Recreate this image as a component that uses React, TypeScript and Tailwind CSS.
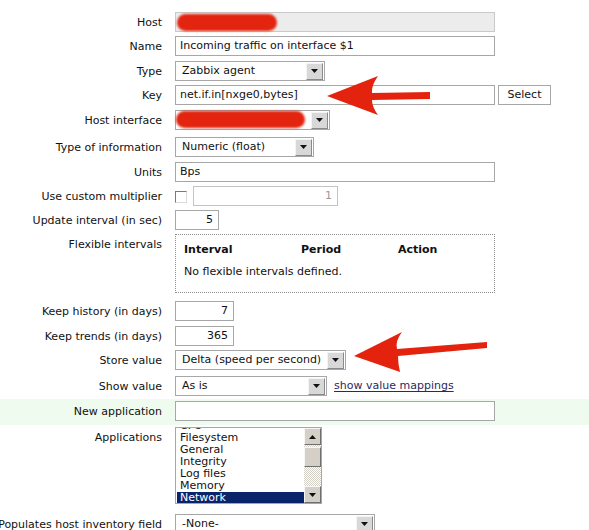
import React from "react";

function Label({ children }: { children?: React.ReactNode }) {
  return (
    <div className="flex w-[162px] shrink-0 justify-end pt-[3px] leading-[20px] whitespace-nowrap">
      {children}
    </div>
  );
}

function Row({
  label,
  h,
  children,
  className = "",
}: {
  label?: React.ReactNode;
  h: string;
  children?: React.ReactNode;
  className?: string;
}) {
  return (
    <div className={`flex ${h} ${className}`}>
      <Label>{label}</Label>
      <div className="ml-[13px] flex items-start gap-[3px] pt-[2px]">{children}</div>
    </div>
  );
}

function DropButton() {
  return (
    <span className="mr-[1px] flex h-[17px] w-[17px] shrink-0 items-center justify-center border border-t-[#f4f4f4] border-l-[#f4f4f4] border-r-[#8a8a8a] border-b-[#8a8a8a] bg-[#d8d8d8]">
      <svg width="7" height="4" viewBox="0 0 7 4">
        <path d="M0 0 H7 L3.5 4 Z" fill="#111" />
      </svg>
    </span>
  );
}

function Select({
  w,
  children,
}: {
  w: string;
  children?: React.ReactNode;
}) {
  return (
    <div className={`relative flex h-[20px] items-center border border-[#a7a7a7] bg-white ${w}`}>
      <span className="flex-1 truncate pl-[6px] leading-[18px]">{children}</span>
      <DropButton />
    </div>
  );
}

function TextBox({
  w,
  children,
  right = false,
  muted = false,
  className = "",
}: {
  w: string;
  children?: React.ReactNode;
  right?: boolean;
  muted?: boolean;
  className?: string;
}) {
  return (
    <div
      className={`relative h-[20px] border border-[#a7a7a7] leading-[18px] whitespace-nowrap ${w} ${
        right ? "pr-[5px] text-right" : "pl-[4px]"
      } ${muted ? "text-[#9a9a9a]" : ""} ${className || "bg-white"}`}
    >
      {children}
    </div>
  );
}

function Scribble({ w }: { w: string }) {
  return (
    <div
      className={`absolute top-[1px] left-[1px] h-[17px] rounded-full bg-[#e3240e] blur-[0.8px] ${w}`}
    />
  );
}

function ScrollArrow({ up }: { up: boolean }) {
  return (
    <div className="flex h-[17px] w-[17px] items-center justify-center border border-t-[#f6f6f6] border-l-[#f6f6f6] border-r-[#6e6e6e] border-b-[#6e6e6e] bg-[#d4d0c8]">
      <svg width="7" height="4" viewBox="0 0 7 4">
        <path d={up ? "M0 4 H7 L3.5 0 Z" : "M0 0 H7 L3.5 4 Z"} fill="#111" />
      </svg>
    </div>
  );
}

const apps = ["CPU", "Filesystem", "General", "Integrity", "Log files", "Memory", "Network"];

export default function App() {
  return (
    <div className="relative h-[530px] w-[589px] overflow-hidden bg-white font-['DejaVu_Sans',Verdana,sans-serif] text-[11px] text-[#111]">
      <div className="flex flex-col pt-[10px]">
        <Row label="Host" h="h-[24px]">
          <TextBox w="w-[320px]" className="border-[#c9c9c9] bg-[#ececec]">
            <Scribble w="w-[100px]" />
          </TextBox>
        </Row>
        <Row label="Name" h="h-[25px]">
          <TextBox w="w-[320px]">Incoming traffic on interface $1</TextBox>
        </Row>
        <Row label="Type" h="h-[24px]">
          <Select w="w-[150px]">Zabbix agent</Select>
        </Row>
        <Row label="Key" h="h-[25px]">
          <TextBox w="w-[320px]">net.if.in[nxge0,bytes]</TextBox>
          <div className="flex h-[20px] w-[53px] items-center justify-center border border-[#a7a7a7] bg-white">
            Select
          </div>
        </Row>
        <Row label="Host interface" h="h-[27px]">
          <div className="relative">
            <Select w="w-[155px]" />
            <Scribble w="w-[129px]" />
          </div>
        </Row>
        <Row label="Type of information" h="h-[25px]">
          <Select w="w-[139px]">Numeric (float)</Select>
        </Row>
        <Row label="Units" h="h-[24px]">
          <TextBox w="w-[320px]">Bps</TextBox>
        </Row>
        <Row label="Use custom multiplier" h="h-[24px]">
          <div className="mt-[5px] h-[12px] w-[12px] border border-t-[#7a7a7a] border-l-[#7a7a7a] border-r-[#dcdcdc] border-b-[#dcdcdc] bg-white" />
          <div className="ml-[3px]">
            <TextBox w="w-[145px]" right muted className="border-[#c4c4c4] bg-white">
              1
            </TextBox>
          </div>
        </Row>
        <Row label="Update interval (in sec)" h="h-[24px]">
          <TextBox w="w-[44px]" right>
            5
          </TextBox>
        </Row>
        <Row label="Flexible intervals" h="h-[67px]">
          <div className="h-[59px] w-[320px] border border-dotted border-[#8c8c8c] px-[8px] pt-[7px]">
            <div className="grid grid-cols-[117px_97px_1fr] font-bold leading-[15px]">
              <span>Interval</span>
              <span>Period</span>
              <span>Action</span>
            </div>
            <div className="mt-[8px] leading-[14px]">No flexible intervals defined.</div>
          </div>
        </Row>
        <Row label="Keep history (in days)" h="h-[25px]">
          <TextBox w="w-[59px]" right>
            7
          </TextBox>
        </Row>
        <Row label="Keep trends (in days)" h="h-[24px]">
          <TextBox w="w-[59px]" right>
            365
          </TextBox>
        </Row>
        <Row label="Store value" h="h-[26px]">
          <Select w="w-[171px]">Delta (speed per second)</Select>
        </Row>
        <Row label="Show value" h="h-[25px]">
          <Select w="w-[152px]">As is</Select>
          <a className="ml-[4px] leading-[20px] text-[#2a2a62] underline underline-offset-2">
            show value mappings
          </a>
        </Row>
        <Row label="New application" h="h-[26px]" className="bg-[#effbef]">
          <TextBox w="w-[320px]" />
        </Row>
        <Row label="Applications" h="h-[87px]">
          <div className="flex h-[77px] w-[147px] overflow-hidden border border-[#a7a7a7] bg-white">
            <div className="flex-1 overflow-hidden pl-[1px]">
              <div className="-mt-[8px] flex flex-col">
                {apps.map((a) => (
                  <div
                    key={a}
                    className={`h-[12px] pl-[3px] leading-[12px] ${
                      a === "Network" ? "bg-[#0a246a] text-white" : ""
                    }`}
                  >
                    {a}
                  </div>
                ))}
              </div>
            </div>
            <div className="flex w-[17px] flex-col">
              <ScrollArrow up />
              <div className="flex-1 bg-[repeating-conic-gradient(#d4d0c8_0_25%,#ffffff_0_50%)] bg-[length:2px_2px]">
                <div className="mt-[2px] h-[20px] border border-t-[#f6f6f6] border-l-[#f6f6f6] border-r-[#6e6e6e] border-b-[#6e6e6e] bg-[#d4d0c8]" />
              </div>
              <ScrollArrow up={false} />
            </div>
          </div>
        </Row>
        <Row label="Populates host inventory field" h="h-[24px]">
          <Select w="w-[200px]">-None-</Select>
        </Row>
      </div>

      {/* red pointer arrows drawn over the form */}
      <svg
        className="pointer-events-none absolute top-0 left-0"
        width="589"
        height="530"
        viewBox="0 0 589 530"
      >
        <path
          d="M327 96 L378 76 Q371 86 372 93 L430 92 L430 99 L372 100 Q372 107 378 115 Z"
          fill="#e4230f"
        />
        <path
          d="M354 356 L402 332 Q395 341 397 349 L487 342 L487 348 L398 356 Q398 364 400 372 Z"
          fill="#e4230f"
        />
      </svg>
    </div>
  );
}
